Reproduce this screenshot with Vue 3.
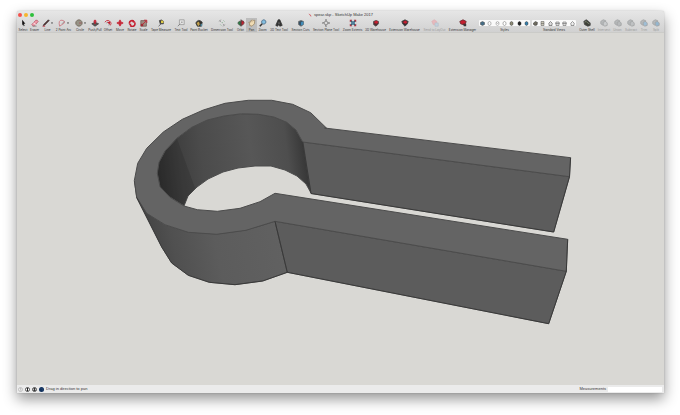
<script setup>
const dark = '#383838'
const red = '#c51f30'
const blue = '#3580ad'

// Each icon is a list of [path, fill, stroke] on a 10 by 10 grid.
const solidBlocks = (front) => [
  ['M1 3 L4 1 L7 2 V6 L4 8 L1 6 Z', '#a9adaf', '#8a8d8e'],
  ['M4 4 L7 3 L9 5 V8 L6 9 L4 7 Z', front, '#8a8d8e']
]

const tools = [
  { label: 'Select', icon: [['M4 1 L8 6 L6 6 L7 8.5 L6 9 L5 6.5 L4 8 Z', '#111', 'none']] },
  { label: 'Eraser', icon: [['M1 7 L6 1.5 Q8 1 9 3 L4 9 Q2 9 1 7 Z', '#f09aa8', '#b8606e'], ['M3 5 L6 7', 'none', '#fff'], ['M2 9 H7', 'none', '#888']] },
  { label: 'Line', menu: true, icon: [['M1 9 Q3 7 2 7 L8 1 L9 2 L3 8', '#5b2a2a', '#444'], ['M1 9 H4', 'none', red]] },
  { label: '2 Point Arc', menu: true, icon: [['M2 9 Q0 1 5 1.5 Q9 2 8 5 L2 9', 'none', '#cc6f78'], ['M5 6 L8 3', 'none', '#888']] },
  { label: 'Circle', menu: true, icon: [['M5 1 A4 4 0 1 1 4.9 1 Z', '#969386', '#6d6154'], ['M5 5 L8 5', 'none', '#a5525a']] },
  { label: 'Push/Pull', icon: [['M1 6 L5 4 L9.5 6 L5 9 Z', '#5c5252', '#444'], ['M5 .5 L7.5 3 H6 V6 H4 V3 H2.5 Z', red, 'none']] },
  { label: 'Offset', icon: [['M1 4 Q5 -1 9 5 L8 8', 'none', red], ['M3 5 Q5 2 7 6 L6 8', 'none', '#777'], ['M4 4 L8 3 L7 7 Z', red, 'none']] },
  { label: 'Move', icon: [['M5 .5 L7 3 H6 V4 H7 V3 L9.5 5 L7 7 V6 H6 V7 H7 L5 9.5 L3 7 H4 V6 H3 V7 L.5 5 L3 3 V4 H4 V3 H3 Z', red, 'none']] },
  { label: 'Rotate', icon: [['M2 6 A3 3 0 0 1 7 3 M8 4 A3 3 0 0 1 3 8', 'none', red, 2], ['M6 .8 L9 3.5 L6 5 Z M4 9.5 L1 7 L4 5.5 Z', red, 'none']] },
  { label: 'Scale', icon: [['M1 2 H8 V9 H1 Z', '#9d8a80', '#75605a'], ['M3 7 L8 2 M5 1.5 H8.5 V5', 'none', red], ['M1 6 H4 V9 H1 Z', '#a52a35', 'none']] },
  { label: 'Tape Measure', icon: [['M3 2 Q6 0 8 3 V6 L4 6 Z', '#44443c', '#444'], ['M5 2 H8 V5 H5 Z', '#ddc947', 'none'], ['M5 6 L2 9', 'none', '#444']] },
  { label: 'Text Tool', icon: [['M3 1 H9 V7 H3 Z', '#e4e4e4', '#999'], ['M1 9 L4 6 M5 4 H7', 'none', '#777']] },
  { label: 'Paint Bucket', icon: [['M1 5 Q4 -1 9 4 L8 9 H3 Z', '#34312b', '#333'], ['M2 5 L5 3 L6 7 L4 9 Z', '#c1a04e', 'none'], ['M7 6 H9 V9 H7 Z', '#538aa1', 'none']] },
  { label: 'Dimension Tool', icon: [['M1 3 L4 1 M6 9 L9 7 M2 2 L4 4 M6 6 L8 8', 'none', '#999'], ['M5 4 L6 5 M7 2 L8 3 M3 7 L4 8', 'none', '#6aa878']] },
  { label: 'Orbit', icon: [['M1 5 Q3 1 5 4 V8 Q2 8 1 5 Z', '#2d7c46', '#454'], ['M5 2 Q9 2 9 5 Q8 8 5 8 Z', red, '#644'], ['M5 .5 V9.5', 'none', '#444']] },
  { label: 'Pan', active: true, icon: [['M2 6 L1 4 L3 4 L4 1.5 L5 2 L6 1 L7 2 L8.5 1.5 L8 6 L5 9 L2 8 Z', '#f0dcb4', '#9b8868'], ['M5 2 V4', 'none', '#c0a680']] },
  { label: 'Zoom', icon: [['M6 1 A2.7 2.7 0 1 1 5.9 1 Z', '#83bee0', '#4a6a84'], ['M4 6 L1 9', 'none', '#333', 2]] },
  { label: '3D Text Tool', icon: [['M4 1 H6 L9 8 L6 9 L5 7 L3 9 L1 8 Z', '#333', '#333'], ['M5 3 L6 6 H4 Z', '#777', 'none']] },
  { label: 'Section Cuts', icon: [['M2 3 L5 2 L8 3 V7 L5 9 L2 7 Z', '#34536a', '#666'], ['M5 4 L8 3 V7 L5 8 Z', '#438eba', 'none']] },
  { label: 'Section Plane Tool', icon: [['M2 5 L5 2 L8 5 L5 8 Z M5 0 V2 M5 8 V10 M0 5 H2 M8 5 H10', 'none', '#555']] },
  { label: 'Zoom Extents', icon: [['M2 2 L8 8 M8 2 L2 8', 'none', '#345c73', 2], ['M1 1 H4 L1 4 Z M9 1 V4 L6 1 Z M1 9 V6 L4 9 Z M9 9 H6 L9 6 Z', '#b5303c', 'none'], ['M4 4 H6 V6 H4 Z', '#55a0c6', 'none']] },
  { label: '3D Warehouse', icon: [['M2 3 L5 2 L8 3 L8 6 L5 9 L2 7 Z', '#562d31', '#444'], ['M3 3 L6 2 L8 4 L6 6 L3 5 Z', red, 'none']] },
  { label: 'Extension Warehouse', icon: [['M1 3 L5 1 L9 3 L8 6 L5 9 L2 6 Z', '#382d2f', '#444'], ['M3 3 L6 2 L8 4 L6 6 L3 5 Z', red, 'none']] },
  { label: 'Send to LayOut', disabled: true, icon: [['M1 3 L4 1 L7 3 V7 L3 7 Z', '#ecabb0', '#e0a0a6'], ['M5 5 H9 V9 H5 Z', '#bad0e2', '#a9b9c8']] },
  { label: 'Extension Manager', icon: [['M1 3 L5 1 L9 3 L8 6 L5 7 L2 6 Z', red, '#65252b'], ['M5 6 L9 6 V9 H6 Z', '#3e3537', 'none']] },
  {
    label: 'Styles',
    group: [
      [['M1 3 L5 1 L9 3 V7 L5 9 L1 7 Z', '#456d86', '#444']],
      [['M2 3 L5 1 L8 3 V7 L5 9 L2 7 Z', 'none', '#777']],
      [['M2 3 L5 1 L8 3 V7 L5 9 L2 7 Z M2 3 L5 5 L8 3', 'none', '#888']],
      [['M2 3 L5 1 L8 3 V7 L5 9 L2 7 Z', '#fff', '#666']],
      [['M2 3 L5 1 L8 3 V7 L5 9 L2 7 Z', '#8e8c76', dark]],
      [['M2 3 L5 1 L8 3 V7 L5 9 L2 7 Z', '#222', '#222']],
      [['M2 3 L5 1 L8 3 V7 L5 9 L2 7 Z', blue, dark]]
    ]
  },
  {
    label: 'Standard Views',
    group: [
      [['M1 4 L5 1 L9 3 L8 8 L4 9 L1 7 Z', '#6e6b5f', dark]],
      [['M2 1 H8 V9 H2 Z M2 5 H8', '#c9c6b6', '#555']],
      [['M1 5 L5 1 L9 5 M2 5 V9 H8 V5', '#ddd', '#333']],
      [['M2 2 H8 L9 5 H1 Z M2 5 V9 H8 V5', '#ddd', '#555']],
      [['M2 2 H8 L9 5 H1 Z M2 5 V9 H8 V5', '#ddd', '#555']],
      [['M1 5 L5 1 L9 5 M2 5 V9 H8 V5', '#eee', '#444']]
    ]
  },
  { label: 'Outer Shell', icon: [['M1 3 L4 1 L7 3 L9 5 V8 L6 9 L2 7 Z', '#3e4038', '#444'], ['M2 4 L4 3 L6 5 L8 6', 'none', '#87907c']] },
  { label: 'Intersect', disabled: true, icon: solidBlocks('#c4c7c9') },
  { label: 'Union', disabled: true, icon: solidBlocks('#a9adaf') },
  { label: 'Subtract', disabled: true, icon: solidBlocks('#b5b8ba') },
  { label: 'Trim', disabled: true, icon: solidBlocks('#87b4d5') },
  { label: 'Split', disabled: true, icon: solidBlocks('#78a8cb') }
]
</script>

<template>
  <div class="desktop">
    <main class="window">
      <header class="chrome">
        <div class="titlebar">
          <div class="lights">
            <button class="light close" aria-label="Close"></button>
            <button class="light minimize" aria-label="Minimize"></button>
            <button class="light zoom" aria-label="Full screen"></button>
          </div>
          <h1 class="title">
            <svg class="doc" viewBox="0 0 10 10" aria-hidden="true"><path d="M1 1 L5 3 L9 8 L7 9 L4 5 Z" fill="#d25a62" /></svg>
            spear.skp - SketchUp Make 2017
          </h1>
        </div>
        <nav class="toolbar">
          <template v-for="tool in tools" :key="tool.label">
            <div v-if="tool.group" class="tool">
              <div class="group">
                <button v-for="(icon, i) in tool.group" :key="i" class="mini" :aria-label="tool.label + ' ' + (i + 1)">
                  <svg viewBox="0 0 10 10"><path v-for="(p, n) in icon" :key="n" :d="p[0]" :fill="p[1]" :stroke="p[2]" /></svg>
                </button>
              </div>
              <span>{{ tool.label }}</span>
            </div>
            <button v-else class="tool" :class="{ active: tool.active }" :disabled="tool.disabled">
              <span class="glyph">
                <svg class="icon" viewBox="0 0 10 10">
                  <path v-for="(p, n) in tool.icon" :key="n" :d="p[0]" :fill="p[1]" :stroke="p[2]" :stroke-width="p[3] || 1" />
                </svg>
                <svg v-if="tool.menu" class="caret" viewBox="0 0 4 4"><path d="M0 1 H4 L2 4 Z" fill="#333" /></svg>
              </span>
              <span>{{ tool.label }}</span>
            </button>
          </template>
        </nav>
      </header>

      <section class="viewport">
        <svg class="model" viewBox="17 33 647 352" role="img" aria-label="Ring with two arms">
          <defs>
            <linearGradient id="inner" gradientUnits="userSpaceOnUse" x1="157" y1="175" x2="311" y2="155">
              <stop offset="0" stop-color="#2b2b2b" />
              <stop offset=".16" stop-color="#404040" />
              <stop offset=".3" stop-color="#4b4b4b" />
              <stop offset=".62" stop-color="#575757" />
              <stop offset=".85" stop-color="#4e4e4e" />
              <stop offset="1" stop-color="#303030" />
            </linearGradient>
            <linearGradient id="outer" gradientUnits="userSpaceOnUse" x1="144" y1="240" x2="280" y2="212">
              <stop offset="0" stop-color="#424242" />
              <stop offset=".2" stop-color="#505050" />
              <stop offset=".5" stop-color="#5c5c5c" />
              <stop offset="1" stop-color="#616161" />
            </linearGradient>
          </defs>
          <g class="edges">
            <path
              fill="url(#inner)"
              d="M303 142 L296 130 L287 122 L274 117 L258 114 L242 114 L224 116 L207 120 L192 127 L177 138 L165 151 L159 162 L157 173 L160 187 L170 197 L184 206 L188 196 L197 187 L208 179 L223 172 L238 168 L255 166 L271 166 L285 170 L297 176 L306 184 L311 193 Z"
            />
            <path class="shade" d="M177 139 L165 151 L159 162 L158 173 L160 186 L170 197 L184 205 L188 196 L195 188 Z" />
            <path class="face" d="M303 142 L569.5 176.7 L553.7 232 L311 193.5 Z" />
            <path
              fill="url(#outer)"
              d="M134.5 181 L136.7 197.5 L161.7 247 L171.7 263 L188.3 275.3 L209.3 282.3 L235 284.7 L262.7 281 L287.3 272.3 L275 221.3 L246 230 L216.7 234 L188 232 L165 225 L147 213 Z"
            />
            <path class="face" d="M275 221.3 L566.3 271.3 L548.7 323.7 L287.3 272.3 Z" />
            <path
              class="top"
              d="M326.7 128.3 L310.7 112.7 L292.7 104.3 L271.7 100.3 L248.3 100.3 L225 103.3 L203.3 110 L182.3 119.3 L163.3 132 L146.7 148.3 L137.7 163.3 L134.3 180.7 L136.7 197.3 L146.7 213.3 L165 224.7 L188.3 232.3 L216.7 234.3 L246 230.3 L275 221.3 L566.3 271.3 L567.7 239.3 L275 193.3 L260 201.7 L240 208.3 L217.3 211.3 L197.3 209.7 L184 206 L170 197.3 L160 186.7 L157.3 173.3 L159 162.3 L165 151 L176.7 138.3 L191.7 127.3 L207.3 120 L224 116 L241.7 113.7 L258.3 114.3 L274 117 L286.7 122.3 L296 130 L302.7 142 L569.5 176.7 L570.6 157.7 L324.5 128 Z"
            />
          </g>
          <path
            class="outline"
            d="M302.7 142 L311 193.5 L553.7 232 L569.5 176.7 L570.6 157.7 M275 221.3 L287.3 272.3 L548.7 323.7 L566.3 271.3 L567.7 239.3 M136.7 197.5 L161.7 247 L171.7 263 L188.3 275.3 L209.3 282.3 L235 284.7 L262.7 281 L287.3 272.3"
          />
        </svg>
      </section>

      <footer class="status">
        <svg class="badge" viewBox="0 0 10 10"><circle cx="5" cy="5" r="4" fill="#eee" stroke="#999" /><path d="M4 4 Q5 2 6 4 L5 6 V7" fill="none" stroke="#888" /></svg>
        <svg class="badge" viewBox="0 0 10 10"><circle cx="5" cy="5" r="4" fill="#fff" stroke="#222" stroke-width="1.5" /><path d="M5 2 V8" stroke="#222" stroke-width="2" /></svg>
        <svg class="badge" viewBox="0 0 10 10"><circle cx="5" cy="5" r="4" fill="#fff" stroke="#222" stroke-width="1.5" /><circle cx="5" cy="4" r="2" fill="#222" /><path d="M2 8 Q5 4 8 8 Z" fill="#222" /></svg>
        <svg class="badge" viewBox="0 0 10 10"><circle cx="5" cy="5" r="5" fill="#12315c" /><path d="M3 3 H7 V7" fill="none" stroke="#244c7d" /></svg>
        <span class="hint">Drag in direction to pan</span>
        <label for="measure">Measurements</label>
        <input id="measure" type="text" />
      </footer>
    </main>
  </div>
</template>

<style>
body {
  margin: 0;
  background: #fff;
}
</style>

<style scoped>
.desktop {
  display: flex;
  box-sizing: border-box;
  min-height: 100vh;
  padding: 11px 16px 22px 17px;
}
.window {
  display: flex;
  flex: 1;
  flex-direction: column;
  min-width: 0;
  border-radius: 2px 2px 0 0;
  background: #d9d8d4;
  box-shadow: 0 6px 14px rgba(0, 0, 0, 0.42), 0 0 2px rgba(0, 0, 0, 0.2);
  color: #333;
  font-family: Inter, "Liberation Sans", sans-serif;
  font-size: 3px;
  line-height: 4px;
}
button {
  padding: 0;
  border: 0;
  background: none;
  color: inherit;
  font: inherit;
}
.chrome {
  border-bottom: 1px solid #cbcbc8;
  border-radius: 2px 2px 0 0;
  background: linear-gradient(#e6e6e6, #d1d1d1);
}
.titlebar {
  display: grid;
  grid-template-columns: 1fr auto 1fr;
  align-items: center;
  height: 7px;
  padding: 0 1px;
}
.lights {
  display: flex;
  gap: 2px;
}
.light {
  width: 4px;
  height: 4px;
  border-radius: 50%;
}
.close {
  background: #f4524d;
}
.minimize {
  background: #f6b52e;
}
.zoom {
  background: #2dc03c;
}
.title {
  display: flex;
  align-items: center;
  gap: 2px;
  margin: 0;
  font-family: "Liberation Sans", sans-serif;
  font-size: 4px;
  font-weight: 400;
}
.doc {
  width: 4px;
  height: 4px;
}
.toolbar {
  display: grid;
  grid-template-columns:
    12fr 11fr 15fr 17fr 16fr 14fr 12fr 12fr 12fr 11fr 24fr
    16fr 20fr 26fr 11fr 11fr 11fr 22fr 21fr 30fr 23fr 23fr
    35fr 25fr 31fr 53fr 46fr 20fr 14fr 13fr 14fr 12fr 12fr;
  padding-right: 2px;
}
.tool {
  display: flex;
  flex-direction: column;
  align-items: center;
  min-width: 0;
  height: 14px;
  white-space: nowrap;
}
.tool:disabled {
  color: #999;
}
.tool:disabled .icon {
  opacity: 0.7;
}
.active {
  background: #bdbdbd;
}
.glyph {
  display: flex;
  align-items: center;
  gap: 1px;
  height: 10px;
}
.icon {
  width: 8px;
  height: 8px;
}
.caret {
  width: 2px;
  height: 2px;
}
.group {
  display: flex;
  align-items: center;
  justify-content: space-around;
  align-self: stretch;
  height: 6px;
  margin: 2px 1px;
  border-radius: 1px;
  background: #fafafa;
}
.mini {
  display: flex;
}
.mini svg {
  width: 5px;
  height: 5px;
}
.viewport {
  display: flex;
  flex: 1;
  background: #d9d8d4;
}
.model {
  display: block;
  width: 100%;
}
.edges {
  stroke: #4c4c4c;
  stroke-width: 1;
  stroke-linejoin: round;
}
.top {
  fill: #646464;
}
.face {
  fill: #5c5c5c;
}
.shade {
  fill: #222;
  fill-opacity: 0.25;
  stroke: none;
}
.outline {
  fill: none;
  stroke: #303030;
  stroke-opacity: 0.7;
  stroke-width: 1;
  stroke-linejoin: round;
}
.status {
  display: flex;
  align-items: center;
  gap: 2px;
  height: 8px;
  padding: 0 2px 0 1px;
  background: #ebebeb;
}
.badge {
  width: 5px;
  height: 5px;
}
.hint {
  flex: 1;
}
.hint,
.status label {
  font-family: "Liberation Sans", sans-serif;
  font-size: 4px;
}
.status input {
  box-sizing: border-box;
  width: 54px;
  height: 5px;
  padding: 0 1px;
  border: 0;
  background: #fff;
  font: inherit;
}
</style>
